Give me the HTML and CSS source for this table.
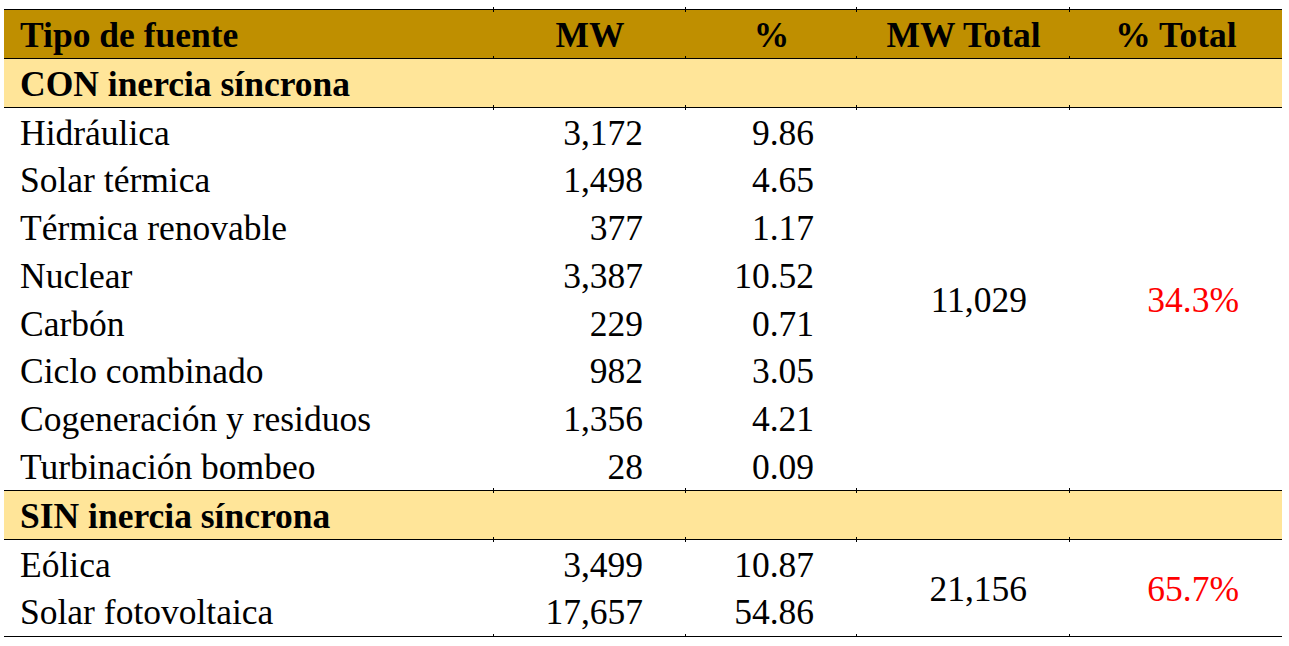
FILE: index.html
```html
<!DOCTYPE html>
<html lang="es">
<head>
<meta charset="utf-8">
<title>Tipo de fuente</title>
<link rel="stylesheet" href="styles.css">
</head>
<body>
<table class="tbl">
  <colgroup>
    <col class="c1"><col class="c2"><col class="c3"><col class="c4"><col class="c5">
  </colgroup>
  <thead>
    <tr class="head">
      <th class="lbl tt tb">Tipo de fuente</th>
      <th class="tt tb tl">MW</th>
      <th class="tt tb tl">%</th>
      <th class="tt tb tl">MW Total</th>
      <th class="tt tb tl">% Total</th>
    </tr>
  </thead>
  <tbody>
    <tr class="sec">
      <td class="lbl tb">CON inercia síncrona</td>
      <td class="tb tl"></td><td class="tb tl"></td><td class="tb tl"></td><td class="tb tl"></td>
    </tr>
    <tr class="row"><td class="lbl">Hidráulica</td><td class="num">3,172</td><td class="num">9.86</td>
      <td class="num" rowspan="8">11,029</td><td class="num red" rowspan="8">34.3%</td></tr>
    <tr class="row"><td class="lbl">Solar térmica</td><td class="num">1,498</td><td class="num">4.65</td></tr>
    <tr class="row"><td class="lbl">Térmica renovable</td><td class="num">377</td><td class="num">1.17</td></tr>
    <tr class="row"><td class="lbl">Nuclear</td><td class="num">3,387</td><td class="num">10.52</td></tr>
    <tr class="row"><td class="lbl">Carbón</td><td class="num">229</td><td class="num">0.71</td></tr>
    <tr class="row"><td class="lbl">Ciclo combinado</td><td class="num">982</td><td class="num">3.05</td></tr>
    <tr class="row"><td class="lbl">Cogeneración y residuos</td><td class="num">1,356</td><td class="num">4.21</td></tr>
    <tr class="row"><td class="lbl">Turbinación bombeo</td><td class="num">28</td><td class="num">0.09</td></tr>
    <tr class="sec">
      <td class="lbl tt tb">SIN inercia síncrona</td>
      <td class="tt tb tl"></td><td class="tt tb tl"></td><td class="tt tb tl"></td><td class="tt tb tl"></td>
    </tr>
    <tr class="row"><td class="lbl">Eólica</td><td class="num">3,499</td><td class="num">10.87</td>
      <td class="num tb tl endcell" rowspan="2">21,156</td><td class="num red tb tl endcell" rowspan="2">65.7%</td></tr>
    <tr class="row last"><td class="lbl">Solar fotovoltaica</td><td class="num tb tl">17,657</td><td class="num tb tl">54.86</td></tr>
  </tbody>
</table>
</body>
</html>
```

FILE: styles.css
```css
html, body {
  margin: 0;
  padding: 0;
  background: #ffffff;
}

body {
  padding: 9px 0 0 4px;
  font-family: "Liberation Serif", "Times New Roman", serif;
  color: #000000;
}

.tbl {
  border-collapse: collapse;
  width: 1278px;
  table-layout: fixed;
  font-size: 35.5px;
  line-height: 1;
}

.c1 { width: 490px; }
.c2 { width: 192px; }
.c3 { width: 171px; }
.c4 { width: 213px; }
.c5 { width: 212px; }

.tbl th,
.tbl td {
  position: relative;
  padding: 3px 0 0 0;
  vertical-align: middle;
  white-space: nowrap;
}

.head th {
  background: #bf8f00;
  font-weight: bold;
  text-align: center;
  height: 45px;
  border-top: 1px solid #000000;
  border-bottom: 1px solid #000000;
}

.head th.lbl {
  text-align: left;
}

.sec td {
  background: #ffe599;
  font-weight: bold;
  height: 45px;
  border-top: 1px solid #000000;
  border-bottom: 1px solid #000000;
}

.row td {
  height: 44.75px;
}

.row.last td,
.row td.endcell {
  border-bottom: 1px solid #000000;
}

.lbl {
  text-align: left;
  padding-left: 16px !important;
}

.num {
  text-align: right;
  padding-right: 43px !important;
}

.red {
  color: #ff0000;
}

/* small column-boundary ticks crossing the horizontal rules */
.tl.tt::before {
  content: "";
  position: absolute;
  left: -1px;
  top: -3px;
  width: 1px;
  height: 5px;
  background: #000000;
}

.tl.tb::after {
  content: "";
  position: absolute;
  left: -1px;
  bottom: -3px;
  width: 1px;
  height: 5px;
  background: #000000;
}
```
